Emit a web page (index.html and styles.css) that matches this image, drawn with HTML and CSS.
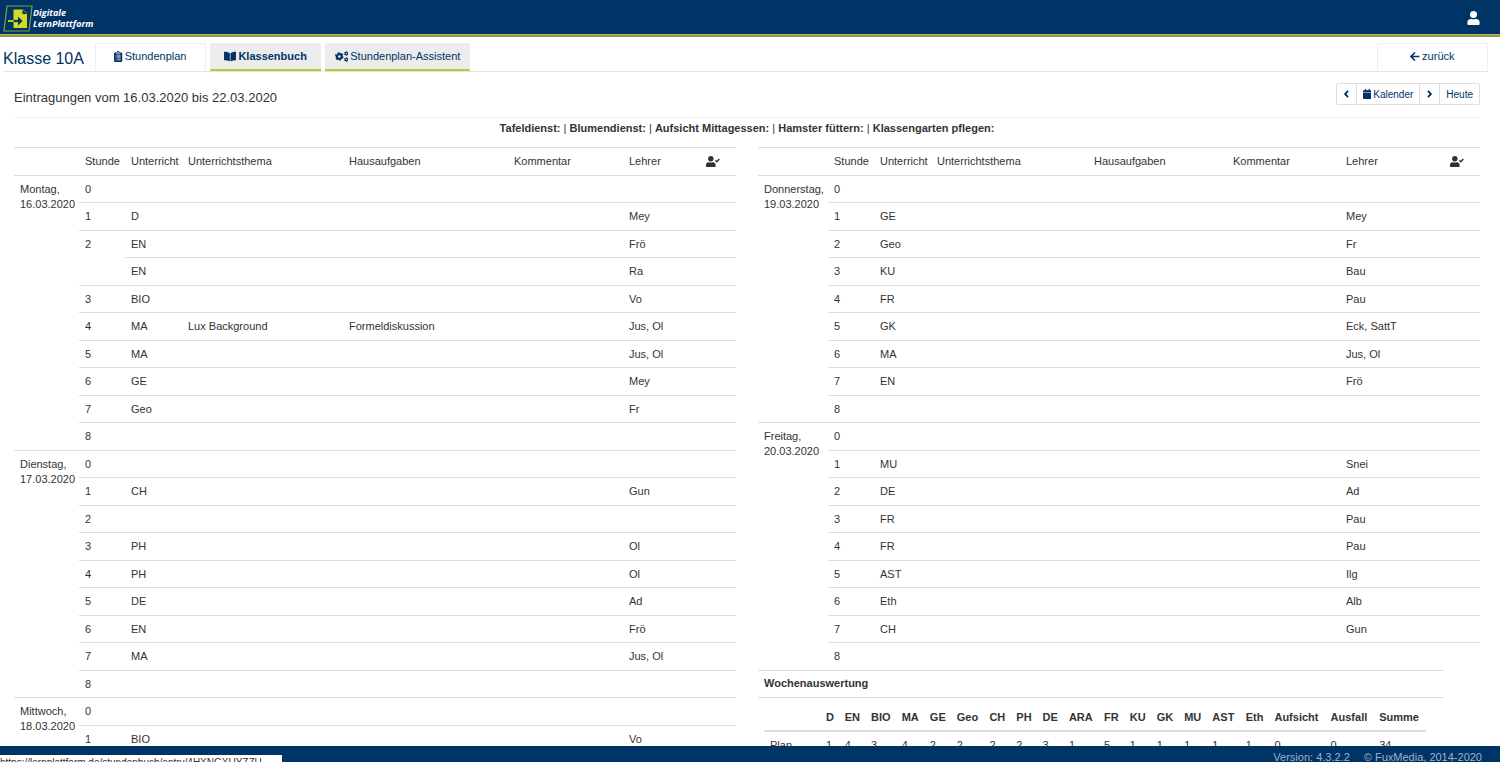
FILE: index.html
```html
<!DOCTYPE html>
<html lang="de">
<head>
<meta charset="utf-8">
<title>Klassenbuch – Klasse 10A</title>
<link rel="stylesheet" href="styles.css">
</head>
<body>
<div class="app">
  <header class="topbar">
    <a class="brand" href="#" aria-label="Digitale LernPlattform">
      <svg class="brand-mark" viewBox="0 0 30 28" aria-hidden="true">
        <path d="M4 2H29L26 27H1Z" fill="none" stroke="#7f9f45" stroke-width="1.200"/>
        <path d="M10.500 5.500H20L24 9.500V24H10.500Z" fill="#d3dc1e"/>
        <path d="M19.500 5.500V10H24Z" fill="#003366"/>
        <path d="M10.500 17H16" stroke="#003366" stroke-width="2.200"/>
        <path d="M5 17H10.500" stroke="#d3dc1e" stroke-width="1.800"/>
        <path d="M15 12.500L19.500 17L15 21.500Z" fill="#003366"/>
      </svg>
      <span class="brand-text">Digitale<br>LernPlattform</span>
    </a>
    <button class="user" type="button" aria-label="Benutzer">
      <svg viewBox="0 0 448 512" aria-hidden="true"><path d="M224 256a128 128 0 1 0 0-256 128 128 0 1 0 0 256zm90 32h-17a174 174 0 0 1-146 0h-17A134 134 0 0 0 0 422v42c0 27 21 48 48 48h352c27 0 48-21 48-48v-42a134 134 0 0 0-134-134z"/></svg>
    </button>
  </header>

  <nav class="tabs">
    <h1 class="class-name">Klasse 10A</h1>
    <a class="tab" href="#"><svg class="icon" viewBox="0 0 384 512" aria-hidden="true"><path fill-rule="evenodd" d="M384 112v352a48 48 0 0 1-48 48H48a48 48 0 0 1-48-48V112a48 48 0 0 1 48-48h80a64 64 0 0 1 128 0h80a48 48 0 0 1 48 48zM192 40a24 24 0 1 0 0 48 24 24 0 1 0 0-48zM96 112v36h192v-36zM76 215v38h40v-38zM148 215v38h160v-38zM76 305v38h40v-38zM148 305v38h160v-38zM76 395v38h40v-38zM148 395v38h160v-38z"/></svg>Stundenplan</a>
    <a class="tab tab-shaded tab-current" href="#"><svg class="icon" viewBox="0 0 576 512" aria-hidden="true"><path d="M542 32c-55 3-164 15-232 56-4 3-7 8-7 13v364c0 11 12 18 23 13 69-35 169-44 219-47 17-1 30-14 30-30V62c0-17-15-31-33-30zM266 88C198 47 89 35 34 32 16 31 1 45 1 62v339c0 16 13 29 30 30 50 3 150 12 219 47 10 5 22-2 22-13V101c0-5-2-10-6-13z"/></svg>Klassenbuch</a>
    <a class="tab tab-shaded tab-wide" href="#"><svg class="icon" viewBox="0 0 640 512" aria-hidden="true"><g fill="none"><circle cx="200" cy="256" r="112" stroke-width="100"/><circle cx="200" cy="256" r="176" stroke-width="48" stroke-dasharray="92 92"/><circle cx="526" cy="116" r="58" stroke-width="56"/><circle cx="526" cy="116" r="94" stroke-width="36" stroke-dasharray="49 49"/><circle cx="526" cy="396" r="58" stroke-width="56"/><circle cx="526" cy="396" r="94" stroke-width="36" stroke-dasharray="49 49"/></g></svg>Stundenplan-Assistent</a>
    <a class="tab tab-back" href="#"><svg class="icon" viewBox="0 0 448 512" aria-hidden="true"><path d="M232 70L46 256L232 442M50 256H436" fill="none" stroke-width="78"/></svg>zurück</a>
  </nav>

  <main class="content">
    <div class="heading">
      <h2 class="title">Eintragungen vom 16.03.2020 bis 22.03.2020</h2>
      <div class="pager">
        <button type="button" aria-label="Vorherige Woche"><svg class="icon chevron" viewBox="0 0 256 512" aria-hidden="true"><path d="M205 100L60 256L205 412" fill="none" stroke-width="95"/></svg></button>
        <button type="button"><svg class="icon" viewBox="0 0 448 512" aria-hidden="true"><path d="M0 192h448v272a48 48 0 0 1-48 48H48a48 48 0 0 1-48-48zM448 160H0v-48a48 48 0 0 1 48-48h48V0h64v64h128V0h64v64h48a48 48 0 0 1 48 48z"/></svg>Kalender</button>
        <button type="button" aria-label="Nächste Woche"><svg class="icon chevron" viewBox="0 0 256 512" aria-hidden="true"><path d="M51 100L196 256L51 412" fill="none" stroke-width="95"/></svg></button>
        <button type="button">Heute</button>
      </div>
    </div>
    <p class="duties"><b>Tafeldienst:</b> | <b>Blumendienst:</b> | <b>Aufsicht Mittagessen:</b> | <b>Hamster füttern:</b> | <b>Klassengarten pflegen:</b></p>

    <div class="columns">
      <section class="column">
        <table class="log">
          <colgroup><col class="l-day"><col class="c-hour"><col class="c-subject"><col class="l-topic"><col class="l-homework"><col class="l-comment"><col class="l-teacher"><col class="c-check"></colgroup>
          <thead><tr><th></th><th>Stunde</th><th>Unterricht</th><th>Unterrichtsthema</th><th>Hausaufgaben</th><th>Kommentar</th><th>Lehrer</th><th><svg class="icon check" viewBox="0 0 640 512" role="img" aria-label="Anwesenheit"><path d="M224 256a128 128 0 1 0 0-256 128 128 0 1 0 0 256zm90 32h-17a174 174 0 0 1-146 0h-17A134 134 0 0 0 0 422v42c0 27 21 48 48 48h352c27 0 48-21 48-48v-42a134 134 0 0 0-134-134z"/><path d="M440 200L505 262L620 140" fill="none" stroke-width="66"/></svg></th></tr></thead>
          <tbody>
            <tr><td class="day" rowspan="10">Montag, 16.03.2020</td><td>0</td><td></td><td></td><td></td><td></td><td></td><td></td></tr>
            <tr><td>1</td><td>D</td><td></td><td></td><td></td><td>Mey</td><td></td></tr>
            <tr><td rowspan="2">2</td><td>EN</td><td></td><td></td><td></td><td>Frö</td><td></td></tr>
            <tr><td>EN</td><td></td><td></td><td></td><td>Ra</td><td></td></tr>
            <tr><td>3</td><td>BIO</td><td></td><td></td><td></td><td>Vo</td><td></td></tr>
            <tr><td>4</td><td>MA</td><td>Lux Background</td><td>Formeldiskussion</td><td></td><td>Jus, Ol</td><td></td></tr>
            <tr><td>5</td><td>MA</td><td></td><td></td><td></td><td>Jus, Ol</td><td></td></tr>
            <tr><td>6</td><td>GE</td><td></td><td></td><td></td><td>Mey</td><td></td></tr>
            <tr><td>7</td><td>Geo</td><td></td><td></td><td></td><td>Fr</td><td></td></tr>
            <tr><td>8</td><td></td><td></td><td></td><td></td><td></td><td></td></tr>
            <tr><td class="day" rowspan="9">Dienstag, 17.03.2020</td><td>0</td><td></td><td></td><td></td><td></td><td></td><td></td></tr>
            <tr><td>1</td><td>CH</td><td></td><td></td><td></td><td>Gun</td><td></td></tr>
            <tr><td>2</td><td></td><td></td><td></td><td></td><td></td><td></td></tr>
            <tr><td>3</td><td>PH</td><td></td><td></td><td></td><td>Ol</td><td></td></tr>
            <tr><td>4</td><td>PH</td><td></td><td></td><td></td><td>Ol</td><td></td></tr>
            <tr><td>5</td><td>DE</td><td></td><td></td><td></td><td>Ad</td><td></td></tr>
            <tr><td>6</td><td>EN</td><td></td><td></td><td></td><td>Frö</td><td></td></tr>
            <tr><td>7</td><td>MA</td><td></td><td></td><td></td><td>Jus, Ol</td><td></td></tr>
            <tr><td>8</td><td></td><td></td><td></td><td></td><td></td><td></td></tr>
            <tr><td class="day" rowspan="2">Mittwoch, 18.03.2020</td><td>0</td><td></td><td></td><td></td><td></td><td></td><td></td></tr>
            <tr><td>1</td><td>BIO</td><td></td><td></td><td></td><td>Vo</td><td></td></tr>
          </tbody>
        </table>
      </section>

      <section class="column">
        <table class="log">
          <colgroup><col class="r-day"><col class="c-hour"><col class="c-subject"><col class="r-topic"><col class="r-homework"><col class="r-comment"><col class="r-teacher"><col class="c-check"></colgroup>
          <thead><tr><th></th><th>Stunde</th><th>Unterricht</th><th>Unterrichtsthema</th><th>Hausaufgaben</th><th>Kommentar</th><th>Lehrer</th><th><svg class="icon check" viewBox="0 0 640 512" role="img" aria-label="Anwesenheit"><path d="M224 256a128 128 0 1 0 0-256 128 128 0 1 0 0 256zm90 32h-17a174 174 0 0 1-146 0h-17A134 134 0 0 0 0 422v42c0 27 21 48 48 48h352c27 0 48-21 48-48v-42a134 134 0 0 0-134-134z"/><path d="M440 200L505 262L620 140" fill="none" stroke-width="66"/></svg></th></tr></thead>
          <tbody>
            <tr><td class="day" rowspan="9">Donnerstag, 19.03.2020</td><td>0</td><td></td><td></td><td></td><td></td><td></td><td></td></tr>
            <tr><td>1</td><td>GE</td><td></td><td></td><td></td><td>Mey</td><td></td></tr>
            <tr><td>2</td><td>Geo</td><td></td><td></td><td></td><td>Fr</td><td></td></tr>
            <tr><td>3</td><td>KU</td><td></td><td></td><td></td><td>Bau</td><td></td></tr>
            <tr><td>4</td><td>FR</td><td></td><td></td><td></td><td>Pau</td><td></td></tr>
            <tr><td>5</td><td>GK</td><td></td><td></td><td></td><td>Eck, SattT</td><td></td></tr>
            <tr><td>6</td><td>MA</td><td></td><td></td><td></td><td>Jus, Ol</td><td></td></tr>
            <tr><td>7</td><td>EN</td><td></td><td></td><td></td><td>Frö</td><td></td></tr>
            <tr><td>8</td><td></td><td></td><td></td><td></td><td></td><td></td></tr>
            <tr><td class="day" rowspan="9">Freitag, 20.03.2020</td><td>0</td><td></td><td></td><td></td><td></td><td></td><td></td></tr>
            <tr><td>1</td><td>MU</td><td></td><td></td><td></td><td>Snei</td><td></td></tr>
            <tr><td>2</td><td>DE</td><td></td><td></td><td></td><td>Ad</td><td></td></tr>
            <tr><td>3</td><td>FR</td><td></td><td></td><td></td><td>Pau</td><td></td></tr>
            <tr><td>4</td><td>FR</td><td></td><td></td><td></td><td>Pau</td><td></td></tr>
            <tr><td>5</td><td>AST</td><td></td><td></td><td></td><td>Ilg</td><td></td></tr>
            <tr><td>6</td><td>Eth</td><td></td><td></td><td></td><td>Alb</td><td></td></tr>
            <tr><td>7</td><td>CH</td><td></td><td></td><td></td><td>Gun</td><td></td></tr>
            <tr><td>8</td><td></td><td></td><td></td><td></td><td></td><td></td></tr>
          </tbody>
        </table>

        <div class="summary">
          <h3 class="summary-title">Wochenauswertung</h3>
          <div class="summary-body">
            <table class="totals">
              <thead><tr><th class="totals-label"></th><th>D</th><th>EN</th><th>BIO</th><th>MA</th><th>GE</th><th>Geo</th><th>CH</th><th>PH</th><th>DE</th><th>ARA</th><th>FR</th><th>KU</th><th>GK</th><th>MU</th><th>AST</th><th>Eth</th><th>Aufsicht</th><th>Ausfall</th><th>Summe</th></tr></thead>
              <tbody><tr><td class="totals-label">Plan</td><td>1</td><td>4</td><td>3</td><td>4</td><td>2</td><td>2</td><td>2</td><td>2</td><td>3</td><td>1</td><td>5</td><td>1</td><td>1</td><td>1</td><td>1</td><td>1</td><td>0</td><td>0</td><td>34</td></tr></tbody>
            </table>
          </div>
        </div>
      </section>
    </div>
  </main>

  <footer class="footer"><span>Version: 4.3.2.2</span><span>© FuxMedia, 2014-2020</span></footer>
  <div class="link-status">https://lernplattform.de/stundenbuch/entry/4HXNGXUYZZU</div>
</div>
</body>
</html>
```
FILE: styles.css
```css
* { box-sizing: border-box; }

body {
  margin: 0;
  font-family: "Liberation Sans", Arial, sans-serif;
  font-size: 11px;
  line-height: 15px;
  color: #333;
  background: #fff;
}

a { color: inherit; text-decoration: none; }
h1, h2, h3, p { margin: 0; font-weight: normal; }

.app {
  position: relative;
  display: flex;
  flex-direction: column;
  height: 100vh;
  overflow: hidden;
}

.topbar {
  display: flex;
  flex: none;
  align-items: center;
  justify-content: space-between;
  height: 37px;
  padding: 0 20px 0 3px;
  background: #036;
  border-bottom: 2px solid #8f9470;
  box-shadow: inset 0 -1px #b9c32c;
}

.brand { display: flex; align-items: center; color: #fff; }
.brand-mark { width: 30px; height: 28px; }
.brand-text {
  font-family: "Open Sans", "Noto Sans", sans-serif;
  font-size: 9px;
  font-style: italic;
  font-weight: 700;
  line-height: 11px;
}

.user { padding: 0; border: 0; background: none; }
.user svg { display: block; width: 13px; height: 14px; fill: #fff; }

.icon {
  height: 11px;
  margin-right: 2px;
  fill: currentColor;
  stroke: currentColor;
  stroke-width: 0;
  vertical-align: -2px;
}

.tabs {
  display: flex;
  flex: none;
  align-items: flex-end;
  gap: 4px;
  height: 35px;
  margin: 0 12px 0 3px;
  border-bottom: 1px solid #e4e4e4;
  color: #036;
}
.class-name { margin-right: 7px; font-size: 16px; line-height: 24px; }
.tab {
  width: 111px;
  height: 28px;
  padding-top: 5px;
  border: 1px solid #eee;
  border-bottom: 0;
  border-radius: 2px;
  text-align: center;
}
.tab-shaded {
  padding-top: 6px;
  background: #ececec;
  border: 0;
  border-bottom: 2px solid #c0c832;
  border-radius: 2px 2px 0 0;
}
.tab-current { font-weight: 700; }
.tab-wide { width: 145px; }
.tab-back { margin-left: auto; }

.content {
  flex: 1;
  min-height: 0;
  overflow: hidden;
  padding: 0 20px 0 14px;
}

.heading {
  display: flex;
  justify-content: space-between;
  align-items: center;
  height: 46px;
  padding-top: 6px;
  border-bottom: 1px solid #eee;
}
.title { font-size: 13px; }

.pager { display: flex; margin-bottom: 7px; }
.pager button {
  height: 22px;
  padding: 0 6px;
  border: 1px solid #ddd;
  border-left-width: 0;
  background: #fff;
  color: #036;
  font-family: inherit;
  font-size: 10px;
}
.pager button:first-child { border-left-width: 1px; border-radius: 2px 0 0 2px; }
.pager button:last-child { border-radius: 0 2px 2px 0; }
.pager .icon { height: 10px; vertical-align: -1px; }
.pager .chevron { width: 7px; margin: 0; }

.duties { padding: 3px 0 11px; text-align: center; }

.columns { display: grid; grid-template-columns: 1fr 1fr; gap: 22px; }

.log {
  width: 100%;
  table-layout: fixed;
  border-collapse: separate;
  border-spacing: 0;
}
.log th, .log td {
  height: 27px;
  padding: 6px 0 0 6px;
  border-top: 1px solid #ddd;
  text-align: left;
  vertical-align: top;
  font-weight: normal;
}
.log th, .log tr:nth-child(even) td { height: 28px; }
.log .check { height: 11px; margin: 0; }

.c-hour { width: 46px; }
.c-subject { width: 57px; }
.c-check { width: 36px; }
.l-day { width: 65px; }
.l-topic { width: 161px; }
.l-homework { width: 165px; }
.l-comment { width: 115px; }
.l-teacher { width: 77px; }
.r-day { width: 70px; }
.r-topic { width: 157px; }
.r-homework { width: 139px; }
.r-comment { width: 113px; }
.r-teacher { width: 104px; }

.summary { margin-right: 36px; border-top: 1px solid #ddd; }
.summary-title {
  padding: 5px 6px 6px;
  font-size: 11px;
  font-weight: 700;
  border-bottom: 1px solid #ddd;
}
.summary-body { padding: 6px 18px 0 6px; }
.totals { width: 100%; border-collapse: collapse; }
.totals th, .totals td { padding: 6px 5px 5px; text-align: left; }
.totals th { border-bottom: 2px solid #ddd; }
.totals .totals-label { width: 57px; padding-left: 6px; }

.footer {
  display: flex;
  flex: none;
  justify-content: flex-end;
  gap: 14px;
  height: 16px;
  padding: 4px 18px 0;
  overflow: hidden;
  background: #036;
  color: #9db2c8;
}

.link-status {
  position: absolute;
  left: 0;
  bottom: 0;
  width: 282px;
  height: 7px;
  overflow: hidden;
  background: #fff;
  white-space: nowrap;
  font-size: 10px;
}
```
